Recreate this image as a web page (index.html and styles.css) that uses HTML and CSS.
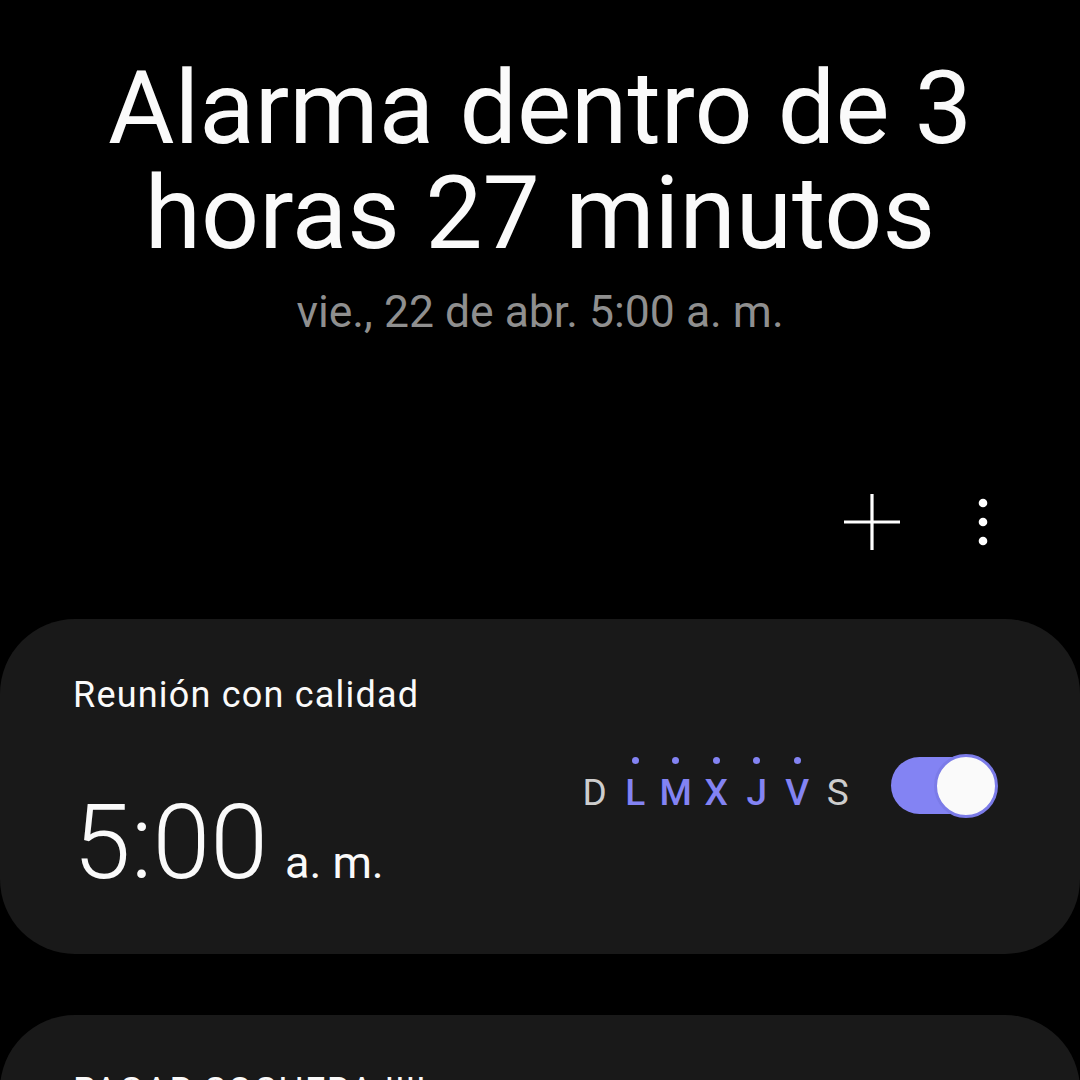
FILE: index.html
```html
<!DOCTYPE html>
<html lang="es">
<head>
    <meta charset="UTF-8">
    <meta name="viewport" content="width=device-width, initial-scale=1.0">
    <title>Alarma</title>
    <link rel="stylesheet" href="styles.css">
</head>
<body>
    <header class="header">
        <h1>Alarma dentro de 3<br>horas 27 minutos</h1>
        <p class="next">vie., 22 de abr. 5:00 a. m.</p>
    </header>

    <div class="toolbar">
        <button class="icon-btn" aria-label="Añadir alarma">
            <svg width="56" height="56" viewBox="0 0 56 56">
                <path d="M28 0V56M0 28H56" stroke="#fff" stroke-width="3.2" fill="none"/>
            </svg>
        </button>
        <button class="icon-btn" aria-label="Más opciones">
            <svg width="10" height="48" viewBox="0 0 10 48">
                <circle cx="5" cy="5" r="4.3" fill="#fff"/>
                <circle cx="5" cy="24" r="4.3" fill="#fff"/>
                <circle cx="5" cy="43" r="4.3" fill="#fff"/>
            </svg>
        </button>
    </div>

    <div class="alarms">
        <div class="alarm">
            <div class="alarm-info">
                <div class="alarm-name">Reunión con calidad</div>
                <div class="alarm-time">5:00<span class="ampm">a. m.</span></div>
            </div>
            <div class="alarm-side">
                <div class="days">
                    <span class="day">D</span>
                    <span class="day on">L</span>
                    <span class="day on">M</span>
                    <span class="day on">X</span>
                    <span class="day on">J</span>
                    <span class="day on">V</span>
                    <span class="day">S</span>
                </div>
                <div class="switch">
                    <div class="track"></div>
                    <div class="thumb"></div>
                </div>
            </div>
        </div>

        <div class="alarm">
            <div class="alarm-info">
                <div class="alarm-name">PAGAR COCHERA !!!!</div>
                <div class="alarm-time">7:00<span class="ampm">a. m.</span></div>
            </div>
        </div>
    </div>
</body>
</html>
```

FILE: styles.css
```css
body {
    margin: 0;
    background-color: #000;
    color: #fafafa;
    font-family: Roboto, "Noto Sans", sans-serif;
    overflow: hidden;
    height: 1080px;
}
.header {
    padding-top: 56px;
    text-align: center;
}
.header h1 {
    margin: 0;
    font-size: 102px;
    line-height: 105px;
    font-weight: 400;
}
.next {
    margin: 20px 0 0;
    font-size: 44.5px;
    line-height: 52px;
    color: #8f8f8f;
}
.toolbar {
    display: flex;
    justify-content: flex-end;
    gap: 39px;
    height: 100px;
    margin-top: 134px;
    padding-right: 61px;
}
.icon-btn {
    width: 72px;
    height: 100px;
    padding: 0;
    background: none;
    border: none;
    display: flex;
    align-items: center;
    justify-content: center;
}
.alarms {
    margin-top: 47px;
    display: flex;
    flex-direction: column;
    gap: 61px;
}
.alarm {
    display: flex;
    justify-content: space-between;
    align-items: center;
    background-color: #191919;
    border-radius: 75px;
    padding: 56px 82px 59.5px 73px;
}
.alarm-name {
    font-size: 36px;
    line-height: 40px;
    letter-spacing: 1.2px;
}
.alarm-time {
    margin-top: 75.5px;
    font-size: 104px;
    line-height: 104px;
    font-weight: 300;
}
.ampm {
    font-size: 45px;
    line-height: 1;
    font-weight: 400;
    margin-left: 17px;
}
.alarm-side {
    display: flex;
    align-items: center;
    gap: 33px;
    padding-top: 3px;
}
.days {
    display: flex;
    padding-top: 13px;
}
.day {
    position: relative;
    width: 40.5px;
    text-align: center;
    font-size: 37px;
    line-height: 40px;
    color: #cdcdcd;
}
.day.on {
    color: #8383f3;
    font-weight: 500;
}
.day.on::before {
    content: "";
    position: absolute;
    left: 50%;
    top: -16px;
    width: 7px;
    height: 7px;
    margin-left: -3.5px;
    border-radius: 50%;
    background-color: #8383f3;
}
.switch {
    position: relative;
    width: 107px;
    height: 66px;
}
.track {
    margin-top: 4px;
    width: 98px;
    height: 57px;
    border-radius: 29px;
    background-color: #8383f3;
}
.thumb {
    position: absolute;
    right: 0;
    top: 1px;
    width: 58px;
    height: 58px;
    border: 3px solid #7b7be8;
    border-radius: 50%;
    background-color: #fafafa;
}
```
